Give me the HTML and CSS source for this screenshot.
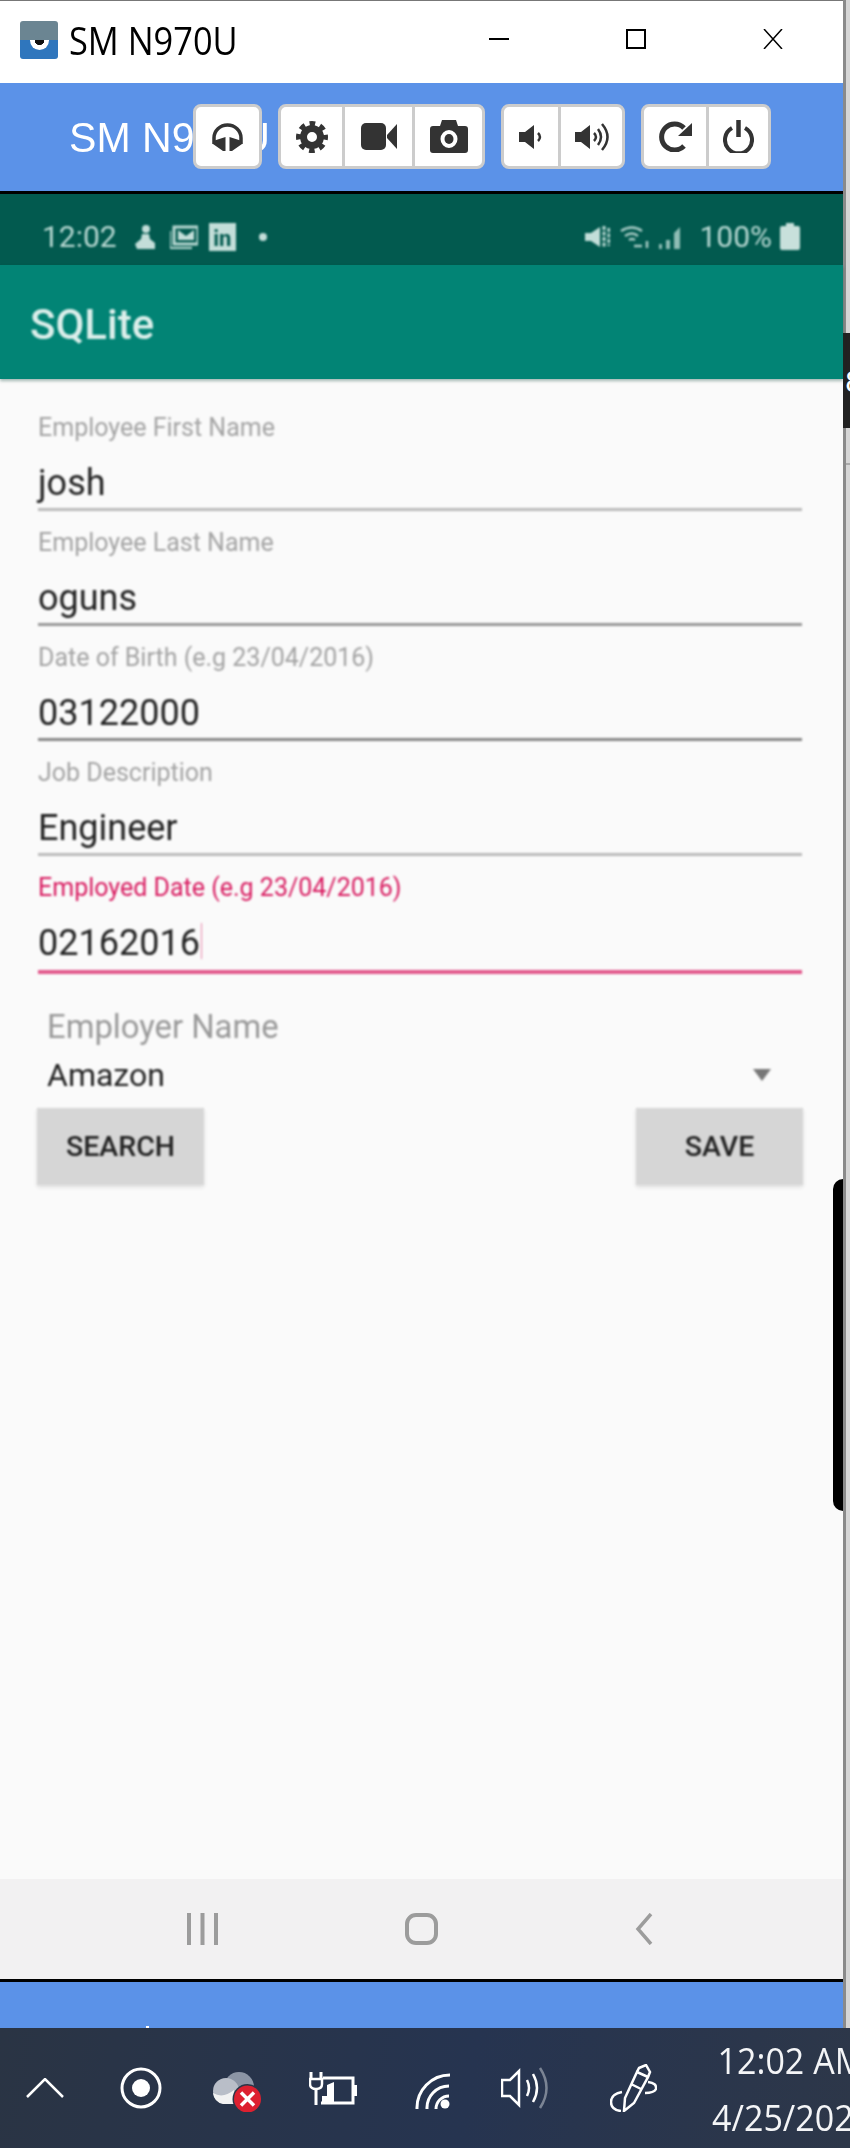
FILE: index.html
```html
<!DOCTYPE html>
<html lang="en">
<head>
    <meta charset="UTF-8">
    <title>SM N970U</title>
    <link rel="stylesheet" href="styles.css">
</head>
<body>
    <div class="desktop">
        <div class="window">
            <div class="titlebar">
                <div class="logo"><span class="logo-eye"></span></div>
                <span class="title-text">SM N970U</span>
                <div class="win-controls">
                    <svg width="20" height="20" viewBox="0 0 20 20"><path d="M0 10H20" stroke="#000" stroke-width="2"/></svg>
                    <svg width="20" height="20" viewBox="0 0 20 20"><rect x="1" y="1" width="18" height="18" fill="none" stroke="#000" stroke-width="2"/></svg>
                    <svg width="20" height="20" viewBox="0 0 20 20"><path d="M1 0L19 20M19 0L1 20" stroke="#000" stroke-width="1.5"/></svg>
                </div>
            </div>

            <div class="bluebar">
                <span class="blue-title">SM N970U</span>
                <div class="toolbar">
                    <div class="btn-group">
                        <div class="tool tool-head">
                            <svg width="33" height="28" viewBox="0 0 33 28"><path d="M3 21V15A13.5 13 0 0 1 30 15V21" fill="none" stroke="#333" stroke-width="3.500"/><path d="M14.500 14V28H12L2 21V18Z M18.500 14V28H21L31 21V18Z" fill="#333"/></svg>
                        </div>
                    </div>
                    <div class="btn-group">
                        <div class="tool tool-gear">
                            <svg width="32" height="32" viewBox="0 0 32 32"><circle cx="16" cy="16" r="8.500" fill="none" stroke="#333" stroke-width="7"/><circle cx="16" cy="16" r="13.500" fill="none" stroke="#333" stroke-width="5" stroke-dasharray="5.600 5" stroke-dashoffset="2.800"/></svg>
                        </div>
                        <div class="tool tool-video">
                            <svg width="36" height="27" viewBox="0 0 36 27"><rect width="25" height="27" rx="5" fill="#333"/><path d="M26 12L36 1V26L26 15Z" fill="#333"/></svg>
                        </div>
                        <div class="tool tool-photo">
                            <svg width="38" height="33" viewBox="0 0 38 33"><path fill-rule="evenodd" d="M3 6H10L12 0H26L28 6H35Q38 6 38 9V30Q38 33 35 33H3Q0 33 0 30V9Q0 6 3 6ZM19 10A8.500 9 0 1 0 19 28A8.500 9 0 1 0 19 10Z" fill="#333"/><ellipse cx="19" cy="19" rx="4.500" ry="5" fill="#333"/></svg>
                        </div>
                    </div>
                    <div class="btn-group">
                        <div class="tool tool-vol-down">
                            <svg width="24" height="24" viewBox="0 0 24 24"><path d="M0 7H6L15 0V24L6 17H0Z" fill="#333"/><path d="M19 8Q23 12 19 16" fill="none" stroke="#333" stroke-width="2.500"/></svg>
                        </div>
                        <div class="tool tool-vol-up">
                            <svg width="34" height="28" viewBox="0 0 34 28"><path d="M0 9H6L15 2V26L6 19H0Z" fill="#333"/><path d="M19 10Q23 14 19 18M23 6Q29 14 23 22M27 1Q38 14 27 27" fill="none" stroke="#333" stroke-width="2.500"/></svg>
                        </div>
                    </div>
                    <div class="btn-group">
                        <div class="tool tool-reload">
                            <svg width="33" height="31" viewBox="0 0 33 31"><path d="M25 7A13 13 0 1 0 25 25" fill="none" stroke="#333" stroke-width="5"/><path d="M33 2V15H19Z" fill="#333"/></svg>
                        </div>
                        <div class="tool tool-power">
                            <svg width="31" height="33" viewBox="0 0 31 33"><path d="M9 8A13.500 13.500 0 1 0 22 8" fill="none" stroke="#333" stroke-width="4"/><path d="M15.500 0V17" stroke="#333" stroke-width="4.500"/></svg>
                        </div>
                    </div>
                </div>
            </div>

            <div class="statusbar">
                <span class="status-time">12:02</span>
                <svg class="st-person" width="22" height="26" viewBox="0 0 22 26"><circle cx="12" cy="5" r="4"/><path d="M8 10H15L16 15L21 19V25H3L1 20L7 15Z"/></svg>
                <svg class="st-mail" width="28" height="24" viewBox="0 0 28 24"><path d="M4 2H28V19H4Z" fill="none" stroke="#b9d9d3" stroke-width="3"/><path d="M8 5L16 11L24 5V15H8Z"/><path d="M0 6V23H22" fill="none" stroke="#b9d9d3" stroke-width="2"/></svg>
                <span class="st-linkedin">in</span>
                <span class="st-dot"></span>
                <div class="status-right">
                    <svg class="st-mute" width="25" height="24" viewBox="0 0 25 24"><path d="M0 8H6L15 2V22L6 16H0Z"/><path d="M19 1V23M24 3V21" stroke="#b9d9d3" stroke-width="3" stroke-dasharray="4 1.500" fill="none"/></svg>
                    <svg class="st-wifi" width="30" height="24" viewBox="0 0 30 24"><path d="M1 6Q12 -1 22 6M5 11Q12 6 18 11M9 15Q12 13 15 15" fill="none" stroke="#a9ccc6" stroke-width="2.500"/><path d="M14 21H22M27 16V23" stroke="#a9ccc6" stroke-width="2.500"/></svg>
                    <svg class="st-signal" width="24" height="24" viewBox="0 0 24 24"><path d="M1 19H4V24H1ZM8 15H12V24H8ZM16 8V24H22V2Z" fill="#8fbdb5"/></svg>
                    <span class="status-pct">100%</span>
                    <svg class="st-battery" width="20" height="27" viewBox="0 0 20 27"><path d="M6 0H14V3H18Q20 3 20 5V25Q20 27 18 27H2Q0 27 0 25V5Q0 3 2 3H6Z" fill="#c8e0db"/></svg>
                </div>
            </div>

            <div class="appbar"><span class="app-title">SQLite</span></div>

            <div class="screen">
                <div class="form">
                    <div class="field">
                        <div class="field-label">Employee First Name</div>
                        <div class="field-value">josh</div>
                        <div class="field-line line-light"></div>
                    </div>
                    <div class="field">
                        <div class="field-label">Employee Last Name</div>
                        <div class="field-value">oguns</div>
                        <div class="field-line line-mid"></div>
                    </div>
                    <div class="field">
                        <div class="field-label">Date of Birth (e.g 23/04/2016)</div>
                        <div class="field-value">03122000</div>
                        <div class="field-line line-dark"></div>
                    </div>
                    <div class="field">
                        <div class="field-label">Job Description</div>
                        <div class="field-value">Engineer</div>
                        <div class="field-line line-light"></div>
                    </div>
                    <div class="field field-focus">
                        <div class="field-label">Employed Date (e.g 23/04/2016)</div>
                        <div class="field-value">02162016<span class="caret"></span></div>
                        <div class="field-line"></div>
                    </div>

                    <div class="spinner">
                        <div class="spinner-label">Employer Name</div>
                        <div class="spinner-row">
                            <span>Amazon</span>
                            <span class="spinner-arrow"></span>
                        </div>
                    </div>

                    <div class="actions">
                        <button class="action-btn">SEARCH</button>
                        <button class="action-btn">SAVE</button>
                    </div>
                </div>
                <div class="side-tab"></div>
            </div>

            <div class="navbar">
                <svg width="31" height="32" viewBox="0 0 31 32"><path d="M2 0V32M15.500 0V32M29 0V32" stroke="#9c9c9c" stroke-width="4"/></svg>
                <svg width="33" height="32" viewBox="0 0 33 32"><rect x="2" y="2" width="29" height="28" rx="9" fill="none" stroke="#9c9c9c" stroke-width="4"/></svg>
                <svg width="18" height="32" viewBox="0 0 18 32"><path d="M16 1L3 16L16 31" fill="none" stroke="#9c9c9c" stroke-width="3.500"/></svg>
            </div>

            <div class="bluebar-bottom"><span class="speck"></span></div>
        </div>
        <div class="edge">
            <div class="edge-patch"><span class="edge-text">8</span></div>
            <div class="edge-line"></div>
        </div>
    </div>

    <div class="taskbar">
        <svg width="38" height="20" viewBox="0 0 38 20"><path d="M1 19L19 1L37 19" fill="none" stroke="#fff" stroke-width="2.500"/></svg>
        <svg width="42" height="42" viewBox="0 0 42 42"><circle cx="21" cy="21" r="19" fill="none" stroke="#fff" stroke-width="3"/><circle cx="21" cy="21" r="9" fill="#fff"/></svg>
        <svg width="48" height="48" viewBox="0 -8 48 48"><circle cx="26" cy="15" r="15" fill="#8c95a5"/><circle cx="13" cy="19" r="13" fill="#b9bec8"/><path d="M0 21Q10 27 21 18L21 32H10Q1 30 0 21Z" fill="#f2f2f2"/><circle cx="34.500" cy="27" r="15" fill="#2a3548"/><circle cx="34.500" cy="27" r="13.500" fill="#dd2030"/><path d="M28 20.500L41 33.500M41 20.500L28 33.500" stroke="#fff" stroke-width="3.500"/></svg>
        <svg width="48" height="33" viewBox="0 0 48 33"><path d="M2 0V7M12 0V7M7 17V33" stroke="#fff" stroke-width="3" fill="none"/><path d="M1 7H13V12Q13 17 7 17Q1 17 1 12Z" fill="none" stroke="#fff" stroke-width="2.500"/><path d="M14 6H44V31H12" fill="none" stroke="#fff" stroke-width="3"/><rect x="45" y="13" width="3" height="11" fill="#fff"/><path d="M13 30V24H18V13L25 10V30Z" fill="#fff"/></svg>
        <svg width="36" height="42" viewBox="0 -6 36 42"><path d="M21 36A13 13 0 0 1 34 23M12 36A22 22 0 0 1 34 13M2 36A33 33 0 0 1 35 2" fill="none" stroke="#fff" stroke-width="3"/><circle cx="30" cy="31" r="4.500" fill="#fff"/></svg>
        <svg width="48" height="42" viewBox="0 0 48 42"><path d="M1 13H9L18 4V38L9 29H1Z" fill="none" stroke="#fff" stroke-width="2.500"/><path d="M26 13Q30 21 26 29M32 7Q40 21 32 35" fill="none" stroke="#fff" stroke-width="2.500"/><path d="M39 1Q52 21 39 41" fill="none" stroke="#7b8494" stroke-width="2.500"/></svg>
        <svg width="47" height="48" viewBox="0 0 47 48"><path d="M14 47L15 34L27 8L38 13L24 39Z M29 4L36 1L40 8L38 13L27 8Z M21 20L31 25" fill="none" stroke="#fff" stroke-width="2.500"/><path d="M12 28Q1 30 1 38Q1 46 11 47" fill="none" stroke="#fff" stroke-width="2.500"/><path d="M38 18Q47 19 46 25Q44 29 35 29" fill="none" stroke="#fff" stroke-width="2.500"/></svg>
        <div class="clock">
            <span>12:02 AM</span>
            <span>4/25/2021</span>
        </div>
    </div>
</body>
</html>
```

FILE: styles.css
```css
html, body {
    margin: 0;
    padding: 0;
}

body {
    width: 850px;
    height: 2148px;
    overflow: hidden;
    font-family: Roboto, Arial, sans-serif;
    background-color: #2a3548;
}

.desktop {
    display: flex;
    height: 2028px;
}

.window {
    width: 843px;
    display: flex;
    flex-direction: column;
    border-top: 1px solid #777;
    box-sizing: border-box;
}

/* title bar */
.titlebar {
    height: 82px;
    background-color: #fff;
    display: flex;
    align-items: center;
    padding-left: 20px;
}

.logo {
    position: relative;
    width: 38px;
    height: 38px;
    margin-top: -5px;
    border-radius: 3px;
    overflow: hidden;
    background: linear-gradient(#6b8592 50%, #2f76bd 50%);
}

.logo-eye {
    position: absolute;
    left: 10px;
    top: 19px;
    width: 19px;
    height: 10px;
    border-radius: 0 0 10px 10px;
    background: radial-gradient(ellipse 5px 5px at 50% 0, #111 98%, #fff 100%);
}

.title-text {
    font-family: "Open Sans", sans-serif;
    font-size: 38px;
    margin-left: 11px;
    margin-top: -4px;
    color: #000;
    display: inline-block;
    transform: scaleX(.905);
    transform-origin: left center;
}

.win-controls {
    margin-left: auto;
    margin-right: 60px;
    margin-top: -6px;
    display: flex;
    gap: 117px;
}

/* blue bar with the buttons */
.bluebar {
    position: relative;
    height: 108px;
    background-color: #5b92e8;
    border-bottom: 3px solid #000;
    display: flex;
    align-items: center;
    padding-left: 69px;
}

.blue-title {
    font-family: "Liberation Sans", Arial, sans-serif;
    font-size: 43px;
    color: #fff;
    display: inline-block;
    transform: scaleX(.955);
    transform-origin: left center;
}

.toolbar {
    position: absolute;
    left: 193px;
    top: 21px;
    display: flex;
    gap: 16px;
}

.btn-group {
    display: flex;
    height: 59px;
    background-color: #fff;
    border: 3px solid #ccc;
    border-radius: 8px;
}

.tool {
    display: flex;
    align-items: center;
    justify-content: center;
}

.tool + .tool {
    border-left: 3px solid #ccc;
}

.tool-head { width: 63px; }
.tool-gear { width: 61px; }
.tool-video { width: 67px; }
.tool-photo { width: 67px; }
.tool-vol-down { width: 54px; }
.tool-vol-up { width: 61px; }
.tool-reload { width: 62px; }
.tool-power { width: 59px; }

/* phone status bar */
.statusbar {
    height: 71px;
    box-sizing: border-box;
    padding: 14px 0 0 42px;
    background-color: #025a4f;
    display: flex;
    align-items: center;
    color: #b9d9d3;
    font-size: 30px;
}

.statusbar > *, .status-right > * {
    filter: blur(1px);
}

.statusbar svg {
    fill: #c3ded9;
}

.status-right {
    filter: none;
}

.st-person { margin-left: 17px; }
.st-mail { margin-left: 14px; }

.st-linkedin {
    margin-left: 11px;
    width: 27px;
    height: 28px;
    background-color: #c3ded9;
    color: #025a4f;
    font-size: 22px;
    font-weight: 700;
    line-height: 32px;
    text-align: center;
}

.st-dot {
    margin-left: 23px;
    width: 8px;
    height: 8px;
    border-radius: 50%;
    background-color: #c3ded9;
}

.status-right {
    margin-left: auto;
    margin-right: 43px;
    display: flex;
    align-items: center;
}

.st-wifi { margin-left: 10px; }
.st-signal { margin-left: 8px; }
.status-pct { margin-left: 17px; }
.st-battery { margin-left: 8px; }

/* app bar */
.appbar {
    height: 114px;
    box-sizing: border-box;
    padding: 5px 0 0 30px;
    background-color: #028475;
    display: flex;
    align-items: center;
    box-shadow: 0 2px 3px rgba(0, 60, 50, .35);
    z-index: 1;
}

.app-title {
    font-size: 42px;
    font-weight: 500;
    color: #dcefeb;
    filter: blur(.8px);
}

/* form */
.screen {
    position: relative;
    height: 1500px;
    background-color: #fafafa;
}

.form {
    padding: 35px 41px 0 38px;
    filter: blur(.8px);
}

.field {
    margin-bottom: 18px;
}

.field-label {
    font-size: 25px;
    line-height: 28px;
    color: #a3a3a3;
    margin-bottom: 19px;
}

.field-value {
    font-size: 36px;
    line-height: 44px;
    color: #222;
}

.field-line {
    height: 3px;
    margin-top: 3px;
}

.line-light { background-color: #bbb; }
.line-mid { background-color: #999; }
.line-dark { background-color: #888; }

.field-focus .field-label {
    color: #d81b60;
}

.field-focus .field-line {
    height: 4px;
    margin-top: 5px;
    background-color: #e2588c;
}

.caret {
    display: inline-block;
    width: 1px;
    height: 36px;
    margin-left: 1px;
    vertical-align: -4px;
    background-color: #d81b60;
    opacity: .5;
}

.spinner {
    margin-top: 33px;
    padding: 0 31px 0 9px;
}

.spinner-label {
    font-size: 32.8px;
    line-height: 40px;
    color: #999;
}

.spinner-row {
    display: flex;
    align-items: center;
    justify-content: space-between;
    font-size: 32px;
    line-height: 40px;
    margin-top: 8px;
    color: #222;
}

.spinner-arrow {
    width: 0;
    height: 0;
    border-left: 9.5px solid transparent;
    border-right: 9.5px solid transparent;
    border-top: 12px solid #777;
}

.actions {
    display: flex;
    justify-content: space-between;
    margin: 13px -1px 0;
}

.action-btn {
    width: 167px;
    height: 77px;
    padding: 0;
    border: none;
    background-color: #d6d6d6;
    box-shadow: 0 2px 4px rgba(0, 0, 0, .12);
    font-family: Roboto, Arial, sans-serif;
    font-size: 28.5px;
    font-weight: 500;
    color: #222;
}

.side-tab {
    position: absolute;
    right: 0;
    top: 800px;
    width: 10px;
    height: 332px;
    background-color: #000;
    border-radius: 12px 0 0 12px;
}

/* phone nav bar */
.navbar {
    height: 100px;
    background-color: #f2f1f2;
    border-bottom: 3px solid #000;
    box-sizing: content-box;
    display: grid;
    grid-template-columns: 218px 230px auto;
    align-items: center;
    padding-left: 187px;
}

.navbar svg {
    filter: blur(.7px);
}

.bluebar-bottom {
    flex: 1;
    display: flex;
    align-items: flex-end;
    padding-left: 146px;
    background-color: #5b92e8;
}

.speck {
    width: 3px;
    height: 2px;
    background-color: #fff;
}

/* strip of the window behind, on the right */
.edge {
    width: 7px;
    background-color: #d6d6d6;
    border-left: 3px solid #8a8a8a;
    box-sizing: border-box;
    position: relative;
}

.edge-patch {
    position: absolute;
    left: -3px;
    top: 333px;
    width: 7px;
    height: 95px;
    background-color: #222;
    overflow: hidden;
}

.edge-text {
    position: absolute;
    left: 2px;
    top: 31px;
    font-size: 30px;
    line-height: 36px;
    color: #fff;
}

.edge-line {
    position: absolute;
    left: 0;
    top: 463px;
    width: 4px;
    height: 2px;
    background-color: #aaa;
}

/* windows taskbar */
.taskbar {
    height: 120px;
    display: grid;
    grid-template-columns: 94px 93px 96px 106px 86px 109px 103px auto;
    align-items: center;
    padding-left: 26px;
    overflow: hidden;
    background: linear-gradient(100deg, #2a3444, #263450 55%, #2d3749);
}

.clock {
    display: flex;
    flex-direction: column;
    gap: 5px;
    margin-left: -1px;
    white-space: nowrap;
    font-family: "Open Sans", sans-serif;
    font-size: 37px;
    line-height: 52px;
    color: #f4f5f7;
    transform: scaleX(.92);
    transform-origin: left center;
}

.clock span:first-child {
    margin-left: 6px;
}
```
